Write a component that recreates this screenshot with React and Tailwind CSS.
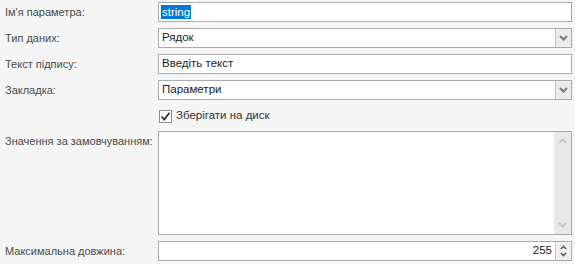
import React from "react";

const Chevron = ({ up = false, color = "#7a7a7a", size = 9 }) => (
  <svg width={size} height={Math.round(size * 0.7)} viewBox="0 0 9 6" className="block">
    <path
      d={up ? "M1 5 L4.5 1.5 L8 5" : "M1 1 L4.5 4.5 L8 1"}
      fill="none"
      stroke={color}
      strokeWidth="2"
    />
  </svg>
);

const Label = ({ children, top = false }) => (
  <div
    className={`w-[158px] shrink-0 pl-[5px] whitespace-nowrap text-[11px] text-[#4a4a4a] ${top ? "pt-[2px]" : "flex items-center"}`}
  >
    {children}
  </div>
);

export default function App() {
  return (
    <div
      className="w-[575px] h-[264px] bg-[#f5f5f5] pt-[2px] flex flex-col text-[11.5px]"
      style={{ fontFamily: '"Liberation Sans", Arial, sans-serif' }}
    >
      {/* Row 1 */}
      <div className="flex h-[20px]">
        <Label>Ім'я параметра:</Label>
        <div className="w-[414px] h-[20px] border border-[#ababab] bg-white flex items-center pl-[2px]">
          <span className="bg-[#0078d7] text-white leading-[14px] px-[1px]">string</span>
        </div>
      </div>
      {/* Row 2 */}
      <div className="flex h-[20px] mt-[6px]">
        <Label>Тип даних:</Label>
        <div className="w-[414px] h-[20px] border border-[#ababab] bg-white flex">
          <div className="flex-1 flex items-center pl-[3px] text-[#222]">Рядок</div>
          <div className="w-[16px] bg-[#ececec] border-l border-[#c4c4c4] flex items-center justify-center">
            <Chevron />
          </div>
        </div>
      </div>
      {/* Row 3 */}
      <div className="flex h-[20px] mt-[6px]">
        <Label>Текст підпису:</Label>
        <div className="w-[414px] h-[20px] border border-[#ababab] bg-white flex items-center pl-[3px] text-[#222]">
          Введіть текст
        </div>
      </div>
      {/* Row 4 */}
      <div className="flex h-[20px] mt-[6px]">
        <Label>Закладка:</Label>
        <div className="w-[414px] h-[20px] border border-[#ababab] bg-white flex">
          <div className="flex-1 flex items-center pl-[3px] text-[#222]">Параметри</div>
          <div className="w-[16px] bg-[#ececec] border-l border-[#c4c4c4] flex items-center justify-center">
            <Chevron />
          </div>
        </div>
      </div>
      {/* Checkbox row */}
      <div className="flex h-[20px] mt-[6px]">
        <div className="w-[158px] shrink-0" />
        <div className="flex items-center pl-[1px]">
          <div className="w-[13px] h-[13px] border border-[#8f8f8f] bg-white flex items-center justify-center">
            <svg width="11" height="11" viewBox="0 0 11 11">
              <path d="M1.5 5.5 L4.2 8.5 L9.5 1.8" fill="none" stroke="#333" strokeWidth="1.8" />
            </svg>
          </div>
          <span className="ml-[4px] text-[#333]">Зберігати на диск</span>
        </div>
      </div>
      {/* Textarea */}
      <div className="flex h-[104px] mt-[5px]">
        <Label top>Значення за замовчуванням:</Label>
        <div className="w-[414px] h-[104px] border border-[#ababab] bg-white flex">
          <div className="flex-1" />
          <div className="w-[17px] bg-[#e8e8e8] flex flex-col items-center justify-between py-[6px]">
            <Chevron up color="#c6c6c6" />
            <Chevron color="#c6c6c6" />
          </div>
        </div>
      </div>
      {/* Number */}
      <div className="flex h-[20px] mt-[6px]">
        <Label>Максимальна довжина:</Label>
        <div className="w-[414px] h-[20px] border border-[#ababab] bg-white flex">
          <div className="flex-1 flex items-center justify-end pr-[3px] text-[#222]">255</div>
          <div className="w-[16px] bg-[#f0f0f0] border-l border-[#c4c4c4] flex flex-col items-center justify-center gap-[2px]">
            <Chevron up size={7} color="#666" />
            <Chevron size={7} color="#666" />
          </div>
        </div>
      </div>
    </div>
  );
}
